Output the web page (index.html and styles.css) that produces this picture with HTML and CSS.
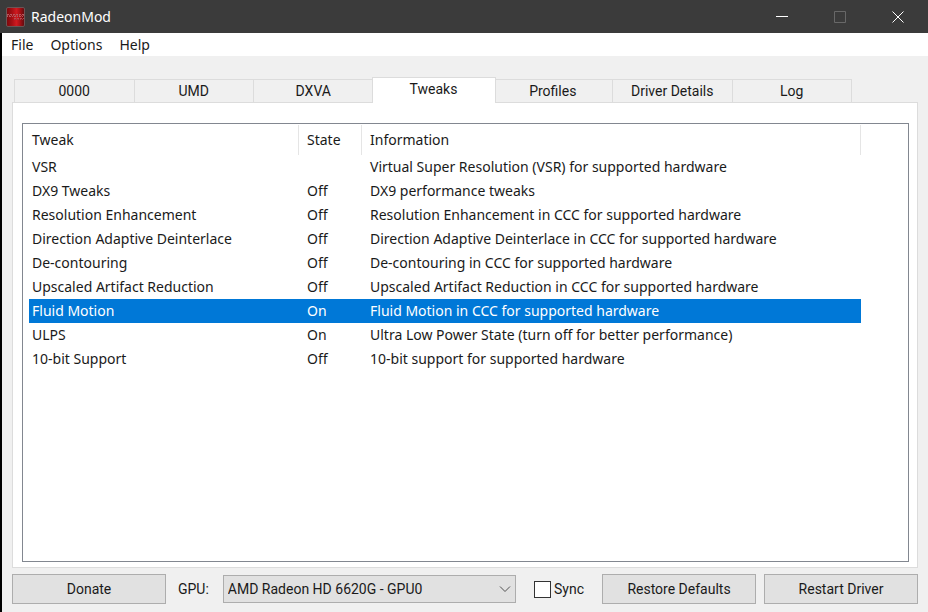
FILE: index.html
```html
<!DOCTYPE html>
<html lang="en">
<head>
<meta charset="utf-8">
<title>RadeonMod</title>
<link rel="stylesheet" href="styles.css">
</head>
<body>
<header class="titlebar">
  <svg class="logo" viewBox="0 0 20 20" aria-hidden="true">
    <defs>
      <linearGradient id="red" x1="0" x2="1" y1="0" y2="0">
        <stop offset="0" stop-color="#7a0a0e"/>
        <stop offset="0.3" stop-color="#a50f14"/>
        <stop offset="0.55" stop-color="#d01a20"/>
        <stop offset="0.75" stop-color="#a81015"/>
        <stop offset="1" stop-color="#5c0b0e"/>
      </linearGradient>
    </defs>
    <rect x="0.5" y="0.5" width="18" height="19" rx="1.5" fill="url(#red)" stroke="#6b5555"/>
    <path d="M1 7.500h17" stroke="#b8585e" stroke-dasharray="2 1"/>
    <path d="M1 8.500h17" stroke="#a8474d" stroke-dasharray="1 1"/>
    <path d="M1 9.500h17" stroke="#b8585e" stroke-dasharray="1 1 2 1"/>
    <path d="M8 11.500h10" stroke="#b64b50" stroke-dasharray="2 1"/>
    <path d="M8 12.500h10" stroke="#a03a40" stroke-dasharray="1 1"/>
  </svg>
  <h1 class="title">RadeonMod</h1>
  <button class="control" aria-label="Minimize"><svg viewBox="0 0 12 12"><path d="M0 5.500h12"/></svg></button>
  <button class="control" aria-label="Maximize" disabled><svg viewBox="0 0 12 12"><path d="M.5 .5h11v11h-11z"/></svg></button>
  <button class="control" aria-label="Close"><svg viewBox="0 0 12 12"><path d="M.5 .5l11 11M11.500 .5l-11 11"/></svg></button>
</header>
<div class="window">
  <nav class="menu">
    <button>File</button>
    <button>Options</button>
    <button>Help</button>
  </nav>
  <main class="content">
    <div class="tabs" role="tablist">
      <button class="tab" role="tab">0000</button>
      <button class="tab" role="tab">UMD</button>
      <button class="tab" role="tab">DXVA</button>
      <button class="tab selected" role="tab" aria-selected="true">Tweaks</button>
      <button class="tab" role="tab">Profiles</button>
      <button class="tab" role="tab">Driver Details</button>
      <button class="tab" role="tab">Log</button>
    </div>
    <section class="pane" role="tabpanel">
      <div class="list">
        <table>
          <colgroup><col class="col-tweak"><col class="col-state"><col></colgroup>
          <thead><tr><th>Tweak</th><th>State</th><th>Information</th></tr></thead>
          <tbody>
            <tr><td>VSR</td><td></td><td>Virtual Super Resolution (VSR) for supported hardware</td></tr>
            <tr><td>DX9 Tweaks</td><td>Off</td><td>DX9 performance tweaks</td></tr>
            <tr><td>Resolution Enhancement</td><td>Off</td><td>Resolution Enhancement in CCC for supported hardware</td></tr>
            <tr><td>Direction Adaptive Deinterlace</td><td>Off</td><td>Direction Adaptive Deinterlace in CCC for supported hardware</td></tr>
            <tr><td>De-contouring</td><td>Off</td><td>De-contouring in CCC for supported hardware</td></tr>
            <tr><td>Upscaled Artifact Reduction</td><td>Off</td><td>Upscaled Artifact Reduction in CCC for supported hardware</td></tr>
            <tr class="current"><td>Fluid Motion</td><td>On</td><td>Fluid Motion in CCC for supported hardware</td></tr>
            <tr><td>ULPS</td><td>On</td><td>Ultra Low Power State (turn off for better performance)</td></tr>
            <tr><td>10-bit Support</td><td>Off</td><td>10-bit support for supported hardware</td></tr>
          </tbody>
        </table>
      </div>
    </section>
    <footer class="actions">
      <button class="push">Donate</button>
      <label class="gpu-label" for="gpu">GPU:</label>
      <div class="combo">
        <select id="gpu"><option>AMD Radeon HD 6620G - GPU0</option></select>
        <svg viewBox="0 0 12 8" aria-hidden="true"><path d="M1 1.500l5 5 5-5"/></svg>
      </div>
      <label class="sync"><input type="checkbox">Sync</label>
      <button class="push">Restore Defaults</button>
      <button class="push">Restart Driver</button>
    </footer>
  </main>
</div>
</body>
</html>
```
FILE: styles.css
```css
* { box-sizing: border-box; }

body {
  margin: 0;
  min-height: 100vh;
  display: flex;
  flex-direction: column;
  background: #f0f0f0;
  color: #1a1a1a;
  font: 14px/20px "Noto Sans", "Open Sans", sans-serif;
}

button, select, input { font: inherit; color: inherit; margin: 0; }

.titlebar {
  display: flex;
  align-items: center;
  height: 33px;
  padding: 0 1px 0 6px;
  background: #3b3b3b;
  color: #fff;
}
.logo { width: 20px; height: 20px; }
.title { flex: 1; margin: 0 0 0 5px; font-size: 14px; font-weight: 400; }
.control {
  width: 58px;
  height: 33px;
  padding: 0;
  border: 0;
  background: none;
  display: grid;
  place-items: center;
}
.control svg { width: 12px; height: 12px; fill: none; stroke: #fff; }
.control:disabled svg { stroke: #686868; }

.window {
  flex: 1;
  display: flex;
  flex-direction: column;
  border-left: 2px solid #000;
}
.menu {
  display: flex;
  gap: 17px;
  height: 23px;
  padding: 0 9px;
  background: #fff;
}
.menu button { padding: 0; border: 0; background: none; line-height: 24px; }

.content {
  flex: 1;
  display: flex;
  flex-direction: column;
  padding: 21px 10px 8px;
}

.tabs {
  display: flex;
  align-items: flex-end;
  padding: 0 66px 0 2px;
  font: 14px/20px Roboto, sans-serif;
}
.tab {
  flex: 1;
  height: 23px;
  padding: 0;
  border: 1px solid #dcdcdc;
  border-width: 1px 0 0 1px;
  background: #f0f0f0;
  white-space: nowrap;
}
.tab:last-child { border-right-width: 1px; }
.tab.selected {
  flex-grow: 0;
  flex-basis: 124px;
  position: relative;
  height: 26px;
  margin: 0 -3px -1px -1px;
  padding-bottom: 4px;
  border-right-width: 1px;
  background: #fff;
}

.pane {
  flex: 1;
  display: flex;
  padding: 20px 8px 5px 9px;
  border: 1px solid #dcdcdc;
  background: #fff;
}
.list {
  flex: 1;
  padding: 1px 47px 1px 6px;
  border: 1px solid #828790;
}
table { width: 100%; table-layout: fixed; border-collapse: separate; border-spacing: 0; }
.col-tweak { width: 270px; }
.col-state { width: 63px; }
th, td { padding: 0 0 0 8px; text-align: left; font-weight: 400; white-space: nowrap; }
th:first-child, td:first-child { padding-left: 3px; }
th { height: 30px; border-right: 1px solid #e5e5e5; }
td { height: 24px; }
.current { background: #0078d7; color: #fff; }

.actions {
  display: flex;
  align-items: center;
  margin-top: 6px;
  font: 14px/20px Roboto, sans-serif;
}
.push {
  flex: 0 0 154px;
  height: 30px;
  padding: 0;
  border: 1px solid #adadad;
  background: #e1e1e1;
}
.push + .push { margin-left: 8px; }
.gpu-label { margin: 0 14px 0 12px; }
.combo { flex: 1; display: grid; align-items: center; }
.combo select, .combo svg { grid-area: 1 / 1; }
.combo select {
  width: 100%;
  height: 28px;
  padding: 0 24px 0 4px;
  border: 1px solid #adadad;
  border-radius: 0;
  background: #e1e1e1;
  appearance: none;
}
.combo svg {
  width: 12px;
  height: 8px;
  margin-right: 5px;
  justify-self: end;
  fill: none;
  stroke: #505050;
  pointer-events: none;
}
.sync { display: flex; align-items: center; gap: 3px; margin: 0 18px; }
.sync input {
  width: 17px;
  height: 17px;
  border: 1px solid #333;
  background: #fff;
  appearance: none;
}
.sync input:checked { background: #0078d7; }
```
